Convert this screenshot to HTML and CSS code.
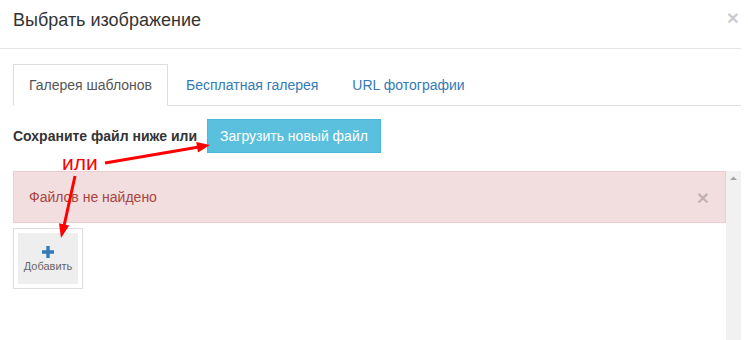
FILE: index.html
```html
<!DOCTYPE html>
<html lang="ru">
<head>
  <meta charset="UTF-8">
  <title>Выбрать изображение</title>
  <link rel="stylesheet" href="styles.css">
</head>
<body>
  <div class="page">
    <!-- Modal -->
    <div class="modal">
      <div class="modal-header">
        <h4 class="modal-title">Выбрать изображение</h4>
        <button class="close" type="button">&times;</button>
      </div>
      <div class="modal-body">
        <ul class="nav-tabs">
          <li class="active"><a href="#">Галерея шаблонов</a></li>
          <li><a href="#">Бесплатная галерея</a></li>
          <li><a href="#">URL фотографии</a></li>
        </ul>
        <div class="upload-row">
          <b>Сохраните файл ниже или</b>
          <button class="btn-info" type="button">Загрузить новый файл</button>
        </div>
        <div class="gallery">
          <div class="gallery-list">
            <div class="alert">
              <span>Файлов не найдено</span>
              <button class="close" type="button">&times;</button>
            </div>
            <div class="tile">
              <div class="tile-inner">
                <svg width="12" height="12" viewBox="0 0 12 12"><path d="M4.3 0h3.4v4.3H12v3.4H7.7V12H4.3V7.7H0V4.3h4.3z" fill="#337ab7"/></svg>
                <span>Добавить</span>
              </div>
            </div>
          </div>
          <!-- Scrollbar-Spur -->
          <div class="scroll-track">
            <svg width="15" height="15" viewBox="0 0 15 15"><path d="M4 9h7L7.5 5.5z" fill="#a3a3a3"/></svg>
          </div>
        </div>
      </div>
    </div>

    <!-- Hinweis-Pfeile über dem Dialog -->
    <div class="annotation">
      <span class="note">или</span>
      <svg width="748" height="340" viewBox="0 0 748 340">
        <line x1="105" y1="163" x2="199" y2="147" stroke="#ff0000" stroke-width="3"/>
        <polygon points="210,145 198,152.4 196.2,142" fill="#ff0000"/>
        <line x1="75" y1="176" x2="64" y2="226" stroke="#ff0000" stroke-width="3"/>
        <polygon points="61,238 69.2,225.4 59,223.2" fill="#ff0000"/>
      </svg>
    </div>
  </div>
</body>
</html>
```

FILE: styles.css
```css
/* Basis */
body {
  margin: 0;
  background: #fff;
  font-family: "Liberation Sans", Arial, sans-serif;
  font-size: 14px;
  line-height: 20px;
  color: #333;
  overflow: hidden;
}
.page {
  position: relative;
  width: 748px;
  height: 340px;
}
.modal {
  width: 741px;
}
/* Header */
.modal-header {
  display: flex;
  justify-content: space-between;
  align-items: flex-start;
  padding: 7px 2px 15px 13px;
  border-bottom: 1px solid #e5e5e5;
}
.modal-title {
  margin: 0;
  font-size: 18px;
  font-weight: normal;
  line-height: 26px;
}
.close {
  padding: 0;
  border: 0;
  background: none;
  font-family: "Liberation Sans", Arial, sans-serif;
  font-size: 21px;
  font-weight: bold;
  line-height: 1;
  color: #000;
  opacity: .2;
  text-shadow: 0 1px 0 #fff;
  cursor: pointer;
}
/* Body + Tabs */
.modal-body {
  padding: 15px 0 0 13px;
}
.nav-tabs {
  display: flex;
  margin: 0;
  padding: 0;
  list-style: none;
  border-bottom: 1px solid #ddd;
}
.nav-tabs li {
  margin-bottom: -1px;
  margin-right: 2px;
}
.nav-tabs a {
  display: block;
  padding: 10px 15px;
  border: 1px solid transparent;
  color: #337ab7;
  text-decoration: none;
}
.nav-tabs .active a {
  color: #555;
  background: #fff;
  border-color: #ddd;
  border-bottom-color: transparent;
}
.upload-row {
  display: flex;
  align-items: center;
  gap: 10px;
  margin-top: 13px;
}
.btn-info {
  padding: 6px 12px;
  border: 1px solid #46b8da;
  background: #5bc0de;
  color: #fff;
  font-family: inherit;
  font-size: 14px;
  line-height: 20px;
  cursor: pointer;
}
/* Galerie mit Scrollbar */
.gallery {
  display: flex;
  margin-top: 18px;
  height: 169px;
}
.gallery-list {
  flex: 1;
  overflow: hidden;
}
.scroll-track {
  width: 15px;
  background: #f1f1f1;
}
.scroll-track svg {
  display: block;
}
.alert {
  display: flex;
  justify-content: space-between;
  align-items: center;
  padding: 15px 16px 15px 15px;
  border: 1px solid #ebccd1;
  background: #f2dede;
  color: #a94442;
}
.alert .close {
  position: relative;
  top: 1px;
  line-height: 20px;
}
.tile {
  display: inline-block;
  margin-top: 5px;
  padding: 4px;
  border: 1px solid #ddd;
}
.tile-inner {
  display: flex;
  flex-direction: column;
  align-items: center;
  box-sizing: border-box;
  width: 60px;
  height: 51px;
  padding-top: 13px;
  background: #eee;
  font-size: 11px;
  line-height: 13px;
  color: #666;
}
.tile-inner span {
  margin-top: 2px;
}
/* Annotation */
.annotation {
  position: absolute;
  top: 0;
  left: 0;
  width: 748px;
  height: 340px;
  pointer-events: none;
}
.annotation svg {
  display: block;
}
.note {
  position: absolute;
  left: 62px;
  top: 152px;
  font-size: 21px;
  line-height: 21px;
  color: #ff0000;
}
```
